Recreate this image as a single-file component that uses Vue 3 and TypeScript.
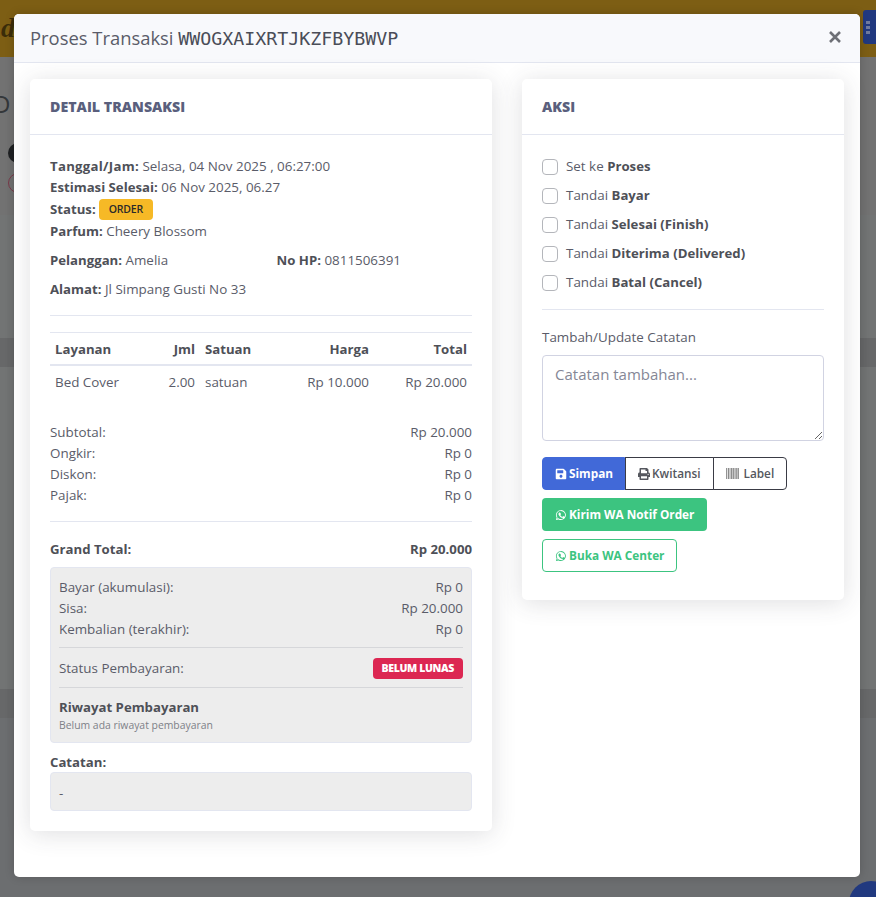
<script setup lang="ts">
const items = [
  { label: 'Set ke ', strong: 'Proses' },
  { label: 'Tandai ', strong: 'Bayar' },
  { label: 'Tandai ', strong: 'Selesai (Finish)' },
  { label: 'Tandai ', strong: 'Diterima (Delivered)' },
  { label: 'Tandai ', strong: 'Batal (Cancel)' },
]
const summary = [
  ['Subtotal:', 'Rp 20.000'],
  ['Ongkir:', 'Rp 0'],
  ['Diskon:', 'Rp 0'],
  ['Pajak:', 'Rp 0'],
]
const paid = [
  ['Bayar (akumulasi):', 'Rp 0'],
  ['Sisa:', 'Rp 20.000'],
  ['Kembalian (terakhir):', 'Rp 0'],
]
const waPath = 'M8 1.2a6.7 6.7 0 0 0-5.8 10.1L1.2 14.8l3.6-.9A6.7 6.7 0 1 0 8 1.2Zm0 1.3a5.4 5.4 0 1 1-2.9 10l-.3-.2-2 .5.5-1.9-.2-.3A5.4 5.4 0 0 1 8 2.5ZM5.900 4.800c-.2 0-.4 0-.6.3-.2.2-.7.7-.7 1.600s.7 1.900.8 2c.1.1 1.400 2.200 3.400 3 1.700.6 2 .5 2.400.5.4 0 1.200-.5 1.300-1 .2-.5.2-.9.1-1l-1.300-.7c-.2-.1-.3-.1-.5.1l-.6.7c-.1.2-.2.2-.4.1-.2-.1-.8-.3-1.500-.9-.6-.5-.9-1.100-1-1.300-.1-.2 0-.3.1-.4l.5-.6c.1-.2.1-.3 0-.4l-.6-1.500c-.2-.4-.3-.4-.5-.4Z'
</script>

<template>
  <div class="page">
    <div class="backdrop">
      <div class="topbar">
        <span class="brand">d</span>
        <span class="menu-btn"><i></i><i></i><i></i></span>
      </div>
      <div class="bg-head">
        <span class="bg-d">D</span>
        <span class="bg-dot"></span>
        <span class="bg-ring"></span>
      </div>
      <div class="bg-block b1"></div>
      <div class="bg-band"></div>
      <div class="bg-block b2"></div>
      <div class="bg-band"></div>
      <div class="bg-block b3"></div>
      <span class="fab"></span>
    </div>

    <div class="modal" role="dialog">
      <header class="modal-header">
        <h5>Proses Transaksi <code>WWOGXAIXRTJKZFBYBWVP</code></h5>
        <svg class="close" viewBox="0 0 12 12" aria-label="Tutup"><path d="M1 1l10 10M11 1L1 11" /></svg>
      </header>

      <div class="modal-body">
        <section class="card detail">
          <div class="card-head">DETAIL TRANSAKSI</div>
          <div class="card-body">
            <div class="line wide"><b>Tanggal/Jam:</b> Selasa, 04 Nov 2025 , 06:27:00</div>
            <div class="line"><b>Estimasi Selesai:</b> 06 Nov 2025, 06.27</div>
            <div class="line status"><b>Status:</b><span class="badge order">ORDER</span></div>
            <div class="line"><b>Parfum:</b> Cheery Blossom</div>
            <div class="two">
              <div><b>Pelanggan:</b> Amelia</div>
              <div><b>No HP:</b> 0811506391</div>
            </div>
            <div class="line address"><b>Alamat:</b> Jl Simpang Gusti No 33</div>
            <hr class="rule first" />
            <table>
              <thead>
                <tr>
                  <th class="c-name">Layanan</th>
                  <th class="num c-qty">Jml</th>
                  <th class="c-unit">Satuan</th>
                  <th class="num c-price">Harga</th>
                  <th class="num">Total</th>
                </tr>
              </thead>
              <tbody>
                <tr>
                  <td>Bed Cover</td>
                  <td class="num">2.00</td>
                  <td>satuan</td>
                  <td class="num">Rp 10.000</td>
                  <td class="num">Rp 20.000</td>
                </tr>
              </tbody>
            </table>
            <div class="summary">
              <div v-for="row in summary" :key="row[0]" class="row"><span>{{ row[0] }}</span><span>{{ row[1] }}</span></div>
            </div>
            <hr class="rule" />
            <div class="row grand"><b>Grand Total:</b><b>Rp 20.000</b></div>
            <div class="well pay">
              <div v-for="row in paid" :key="row[0]" class="row"><span>{{ row[0] }}</span><span>{{ row[1] }}</span></div>
              <hr class="rule tight" />
              <div class="row status-row"><span>Status Pembayaran:</span><span class="badge danger">BELUM LUNAS</span></div>
              <hr class="rule tight" />
              <div class="hist">Riwayat Pembayaran</div>
              <small>Belum ada riwayat pembayaran</small>
            </div>
            <div class="note-label"><b>Catatan:</b></div>
            <div class="well note">-</div>
          </div>
        </section>

        <section class="card action">
          <div class="card-head">AKSI</div>
          <div class="card-body">
            <label v-for="it in items" :key="it.strong" class="check">
              <span class="box"></span>
              <span>{{ it.label }}<b>{{ it.strong }}</b></span>
            </label>
            <hr class="rule act" />
            <div class="form-label">Tambah/Update Catatan</div>
            <textarea placeholder="Catatan tambahan..."></textarea>
            <div class="btn-group">
              <button class="btn primary">
                <svg viewBox="0 0 448 512" class="ico"><path fill="currentColor" fill-rule="evenodd" d="M433.900 129.900l-83.900-83.900A48 48 0 0 0 316.100 32H48C21.500 32 0 53.500 0 80v352c0 26.500 21.500 48 48 48h352c26.500 0 48-21.500 48-48V163.900a48 48 0 0 0-14.100-34ZM224 416c-35.300 0-64-28.700-64-64 0-35.300 28.700-64 64-64s64 28.700 64 64c0 35.300-28.700 64-64 64ZM320 111.500V212c0 6.600-5.400 12-12 12H76c-6.600 0-12-5.400-12-12V108c0-6.600 5.400-12 12-12h228.500c3.200 0 6.200 1.300 8.500 3.500l3.500 3.500c2.200 2.200 3.500 5.300 3.500 8.500Z" /></svg>
                Simpan
              </button>
              <button class="btn ghost">
                <svg viewBox="0 0 512 512" class="ico"><path fill="currentColor" d="M448 192V77.250c0-8.490-3.370-16.620-9.370-22.630L393.370 9.370c-6-6-14.140-9.370-22.630-9.370H96C78.330 0 64 14.330 64 32v160c-35.350 0-64 28.650-64 64v112c0 8.840 7.160 16 16 16h48v96c0 17.670 14.330 32 32 32h320c17.670 0 32-14.330 32-32v-96h48c8.840 0 16-7.160 16-16V256c0-35.350-28.650-64-64-64Zm-64 256H128v-96h256v96Zm0-224H128V64h192v48c0 8.840 7.160 16 16 16h48v96Zm48 72c-13.250 0-24-10.750-24-24 0-13.260 10.750-24 24-24s24 10.740 24 24c0 13.250-10.750 24-24 24Z" /></svg>
                Kwitansi
              </button>
              <button class="btn ghost">
                <svg viewBox="0 0 14 12" class="ico barcode"><path fill="currentColor" d="M0 0h1.200v12H0zM2 0h1.200v12H2zM3.800 0h1v12h-1zM5.400 0h1.600v12H5.400zM7.600 0h1v12h-1zM9.200 0h1.200v12H9.200zM11 0h1v12h-1zM12.500 0H14v12h-1.500z" /></svg>
                Label
              </button>
            </div>
            <button class="btn solid-green"><svg viewBox="0 0 16 16" class="ico"><path fill="currentColor" :d="waPath" /></svg> Kirim WA Notif Order</button>
            <button class="btn outline-green"><svg viewBox="0 0 16 16" class="ico"><path fill="currentColor" :d="waPath" /></svg> Buka WA Center</button>
          </div>
        </section>
      </div>
    </div>
  </div>
</template>

<style>
html, body { margin: 0; height: 100%; overflow: hidden; }
</style>

<style scoped>
.page {
  position: relative;
  width: 876px;
  height: 897px;
  overflow: hidden;
  padding: 14px 16px 0 14px;
  box-sizing: border-box;
  font-family: "Open Sans", "Noto Sans", sans-serif;
  font-size: 13.4px;
  line-height: 21px;
  color: #5a5c69;
}
.backdrop {
  position: absolute;
  inset: 0;
  background: #6f7171;
  display: flex;
  flex-direction: column;
}
.topbar { height: 57px; background: #7d5e14; position: relative; flex: none; }
.brand { position: absolute; left: 1px; top: 12px; font: italic 700 28px "Liberation Serif", serif; color: #3a2c09; }
.menu-btn {
  position: absolute; left: 863px; top: 10px; width: 20px; height: 34px;
  background: #21397f; border-radius: 3px;
  display: flex; flex-direction: column; gap: 2px; padding: 11px 0 0 3px; box-sizing: border-box;
}
.menu-btn i { width: 4px; height: 3px; background: #6f7b9f; }
.bg-head { height: 158px; position: relative; flex: none; background: #727272; }
.bg-d { position: absolute; left: -7px; top: 30px; font: 400 24px "Open Sans", sans-serif; color: #34373a; }
.bg-dot { position: absolute; left: 8px; top: 86px; width: 20px; height: 20px; border-radius: 50%; background: #1f2123; }
.bg-ring { position: absolute; left: 8px; top: 116px; width: 20px; height: 20px; border-radius: 50%; border: 1px solid #7b3a4a; box-sizing: border-box; }
.bg-block { background: #727474; flex: none; }
.b1 { height: 123px; }
.b2 { height: 322px; }
.b3 { flex: 1; background: #6c6e70; }
.bg-band { height: 29px; background: #676869; flex: none; }
.fab { position: absolute; left: 849px; top: 881px; width: 44px; height: 44px; border-radius: 50%; background: #21397f; }

.modal {
  position: relative;
  width: 846px;
  height: 863px;
  background: #fff;
  border-radius: 5px;
  box-shadow: 0 0 10px rgba(0, 0, 0, 0.18);
  display: flex;
  flex-direction: column;
}
.modal-header {
  height: 49px;
  flex: none;
  box-sizing: border-box;
  background: #f8f9fc;
  border-bottom: 1px solid #e3e6f0;
  border-radius: 5px 5px 0 0;
  display: flex;
  align-items: center;
  justify-content: space-between;
  padding: 0 16px;
}
h5 { margin: 0; font-size: 18.400px; font-weight: 400; line-height: 24px; color: #5a5c69; }
code { font-family: "DejaVu Sans Mono", monospace; font-size: 18.300px; color: #4a4d58; }
.close { width: 12px; height: 12px; fill: none; stroke: #6e7076; stroke-width: 2.600; margin-right: 3px; margin-top: -2px; }

.modal-body {
  display: flex;
  align-items: flex-start;
  gap: 30px;
  padding: 16px 16px 0;
}
.card {
  background: #fff;
  border-radius: 5px;
  box-shadow: 0 3px 24px rgba(58, 59, 69, 0.16);
  flex: none;
}
.detail { width: 462px; height: 752px; }
.action { width: 322px; height: 521px; }
.card-head {
  height: 56px;
  box-sizing: border-box;
  border-bottom: 1px solid #e3e6f0;
  padding: 18px 20px 0;
  font-size: 14.200px;
  font-weight: 800;
  color: #5a5f7d;
  line-height: 20px;
}
.card-body { padding: 21px 20px 20px; }
b { font-weight: 700; color: #4e5057; font-size: 13.200px; }

.line { height: 21px; white-space: nowrap; }
.line.wide b { letter-spacing: 0.28px; }
.line.status { height: 23px; display: flex; align-items: center; gap: 3px; }
.badge {
  display: inline-block;
  font-size: 10.500px;
  font-weight: 700;
  line-height: 15px;
  border-radius: 4px;
  letter-spacing: -0.2px;
}
.order { background: #f6b926; color: #2a2a2a; padding: 3px 10px; font-weight: 600; }
.danger { background: #dc2752; color: #fff; padding: 3px 9px; font-weight: 800; letter-spacing: -0.35px; }
.two { display: grid; grid-template-columns: 226.500px 1fr; margin-top: 8px; }
.address { margin-top: 8px; }
.rule { border: 0; border-top: 1px solid #e3e6f0; margin: 0; }
.rule.first { margin: 15px 0 16px; }

table { width: 100%; border-collapse: collapse; border-top: 1px solid #e3e6f0; }
th, td { padding: 0 5px; text-align: left; }
th { height: 30px; padding-top: 1px; border-bottom: 2px solid #e3e6f0; color: #4e5057; font-weight: 700; font-size: 13.200px; }
td { height: 32px; }
.num { text-align: right; }
.c-name { width: 90px; }
.c-qty { width: 40px; }
.c-unit { width: 64px; }
.c-price { width: 90px; }

.summary { margin-top: 24px; }
.row { display: flex; justify-content: space-between; align-items: center; height: 21px; }
.summary + .rule { margin-top: 15px; }
.grand { margin-top: 17px; }
.well {
  background: #ededed;
  border: 1px solid #e3e6f0;
  border-radius: 4px;
  box-sizing: border-box;
}
.pay { margin-top: 7px; padding: 9px 8px 8px; height: 176px; }
.rule.tight { margin: 7px 0 8px; border-top-color: #d6d7da; }
.status-row.row { height: 23px; margin-top: 9px; }
.hist { font-weight: 700; color: #4e5057; height: 21px; margin-top: 9px; font-size: 13.200px; }
small { display: block; font-size: 10.400px; line-height: 14px; color: #7d8087; }
.note-label { margin-top: 9px; height: 20px; }
.note { height: 39px; padding: 10px 8px 0; }

.check { display: flex; align-items: center; gap: 8px; height: 29px; }
.check:first-child { margin-top: -4px; }
.box { width: 16px; height: 16px; box-sizing: border-box; border: 1px solid #b4b6bb; border-radius: 4px; background: #fff; flex: none; }
.rule.act { margin: 12px 0 17px; }
.form-label { height: 21px; }
textarea {
  display: block;
  width: 100%;
  height: 86px;
  margin-top: 7px;
  box-sizing: border-box;
  padding: 6px 12px;
  border: 1px solid #d1d3e2;
  border-radius: 4px;
  font: inherit;
  font-size: 15px;
  line-height: 24px;
  color: #6e707e;
  outline: 0;
}
textarea::placeholder { color: #858796; opacity: 1; }
.btn-group { display: flex; margin-top: 16px; width: max-content; }
.btn {
  display: inline-flex;
  align-items: center;
  gap: 2px;
  height: 33px;
  box-sizing: border-box;
  padding: 0 12px;
  border-radius: 4px;
  font: inherit;
  font-size: 11.800px;
  font-weight: 700;
  border: 1px solid transparent;
  background: #fff;
  white-space: nowrap;
}
.ico { width: 12px; height: 12px; flex: none; }
.ico.barcode { width: 13px; height: 11px; color: #8a8a8a; }
.primary { background: #4169d8; color: #fff; border-radius: 4px 0 0 4px; border-color: #4169d8; padding-right: 11px; }
.ghost { color: #55575e; border-color: #3a3b45; font-weight: 600; border-radius: 0; }
.ghost + .ghost { margin-left: -1px; border-radius: 0 4px 4px 0; gap: 5px; }
.solid-green { background: #3cc480; color: #fff; display: flex; width: max-content; margin-top: 8px; }
.outline-green { color: #3cc480; border-color: #3cc480; display: flex; width: max-content; margin-top: 8px; }
</style>
